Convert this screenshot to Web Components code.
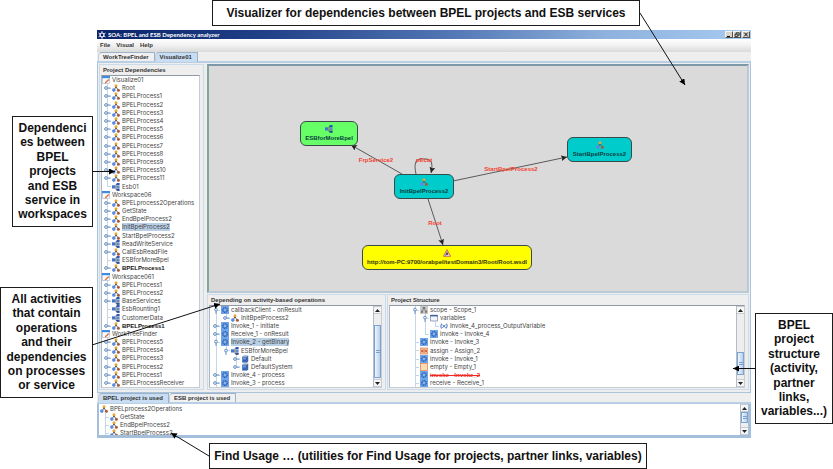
<!DOCTYPE html>
<html lang="en">
<head>
<meta charset="utf-8">
<title>SOA: BPEL and ESB Dependency analyzer</title>
<style>
  html, body { height: 100%; }
  body { margin: 0; background: #fff; font-family: "Liberation Sans", Arial, sans-serif; }
</style>
</head>
<body>
<annotated-page></annotated-page>
<script>
const define = (name, html, after) => customElements.define(name, class extends HTMLElement {
  connectedCallback() {
    if (this.shadowRoot) return;
    const root = this.attachShadow({ mode: "open" });
    const t = document.createElement("template");
    t.innerHTML = typeof html === "function" ? html(this) : html;
    root.append(t.content.cloneNode(true));
    if (after) after(root, this);
  }
});

const ICONS = {
  process: `<path d="M4 3 1.8 6M4 3l2.4 3" stroke="#665c4a" stroke-width=".8"/><circle cx="4" cy="1.7" r="1.5" fill="#e8a838"/><circle cx="4" cy="3.6" r=".8" fill="#555"/><circle cx="1.8" cy="6.1" r="1.8" fill="#5b8be0"/><circle cx="6.4" cy="6.3" r="1.5" fill="#a55a3c"/>`,
  esb: `<path d="M3 4h2M4 1.6v5M4 1.6h2M4 6.5h2" stroke="#444" stroke-width=".7" fill="none"/><rect x="0" y="2.3" width="3.4" height="3.2" fill="#3f74d4"/><rect x="4.6" y="0" width="3" height="2.4" fill="#2858b8"/><rect x="4.6" y="2.9" width="3" height="2.1" fill="#5a8ad8"/><rect x="4.6" y="5.5" width="3" height="2.4" fill="#2d4f98"/><rect x="3.4" y="3.3" width="1.3" height="1.3" fill="#d8b84a"/>`,
  workspace: `<rect x=".4" y=".4" width="7.2" height="7.2" fill="#fdfdfd" stroke="#8aa0bb" stroke-width=".5"/><rect x="0" y="0" width="8" height="2.2" fill="#3f8be0"/><path d="M3.2 7 6.8 3.4" stroke="#e0703a" stroke-width="1.4"/>`,
  gear: `<rect width="8" height="8" fill="#6fa4e6"/><circle cx="4" cy="4" r="2.3" fill="none" stroke="#2860b8" stroke-width="1.4" stroke-dasharray="1.1 .5"/><circle cx="4" cy="4" r="1.4" fill="#a9ccf6" stroke="#2c64bc" stroke-width=".5"/>`,
  cube: `<path d="M1.2 1.6 3 .3h4l-.8 1.2z" fill="#9fb4cc"/><path d="M1.2 1.6h5v6h-5z" fill="#3567b4"/><path d="M6.2 1.5 7.2.4v6.1l-1 1.1z" fill="#23457e"/><path d="M2 2.4h3v2H2z" fill="#6f9be0"/>`,
  scope: `<rect width="8" height="8" fill="#c9c9c9"/><rect x="2.8" y="1" width="2.4" height="2" fill="#777"/><rect x="1" y="4.8" width="2" height="2" fill="#777"/><rect x="5" y="4.8" width="2" height="2" fill="#777"/><path d="M4 3v1M2 4.8V4h4v.8" stroke="#777" stroke-width=".6" fill="none"/>`,
  folder: `<path d="M.5 7V1.2h7V7z" fill="#f2f6fb" stroke="#6c7fa0" stroke-width=".7"/><path d="M.3 2.4V1h7.4v1.4z" fill="#3b61a0"/>`,
  fx: `<path d="M1.6 1.6Q.2 4 1.4 6.6M6.6 1.6Q8 4 6.2 6.6M2.5 2.8 5.5 5.8M5.6 2.6 2.4 5.8" stroke="#2f62b4" stroke-width=".9" fill="none"/>`,
  assign: `<rect y="1" width="8" height="6" fill="#f7c9a8" stroke="#d8683c" stroke-width=".6"/><path d="M1 2.6 3 5.4M3 2.6 1 5.4M4 2.6v2.8M7 2.6 5 5.4M5 2.6 7 5.4" stroke="#c8451e" stroke-width=".8"/>`,
  empty: `<rect x=".4" y=".4" width="7.2" height="7.2" fill="#f8ddb2" stroke="#e07a4a" stroke-width=".7"/>`,
  warn: `<path d="M4 .6 7.6 7.3H.4z" fill="#f6dede" stroke="#c4383a" stroke-width=".7"/><path d="M4 2.6 2.6 5.8h2.8z" fill="#333"/><circle cx="2.8" cy="6" r=".8" fill="#5577cc"/>`,
  app: `<circle cx="4" cy="4" r="2" fill="none" stroke="#fff" stroke-width="1.2"/><path d="M4 0v2M4 6v2M.5 2l1.7 1M5.8 5l1.7 1M.5 6l1.7-1M5.8 3l1.7-1" stroke="#fff" stroke-width=".8"/>`
};

define("ui-icon", el => `
  <style>:host{display:block;flex:none;width:8px;height:8px} svg{display:block;width:100%;height:100%}</style>
  <svg viewBox="0 0 8 8" aria-hidden="true">${ICONS[el.getAttribute("name")]}</svg>`);

/* One line of a tree. "guides" has a digit for each indent before the handle, 1 where
   a vertical line passes; "node" is root, open, closed or leaf. */
define("tree-row", el => {
  const guides = el.getAttribute("guides") || "";
  const node = el.getAttribute("node") || "closed";
  const cells = [...guides].map(g => `<i class="${g === "1" ? "v" : ""}"></i>`).join("");
  const knob = node === "closed"
    ? `<path d="M5 4h3.4" stroke="#6a92c2" stroke-width="1"/><circle cx="4" cy="4" r="1.4" fill="#e8f1fb" stroke="#6a92c2"/>`
    : node === "open" ? `<path d="M5 5v3" stroke="#6a92c2" stroke-width="1"/><circle cx="5" cy="3.6" r="1.4" fill="#e8f1fb" stroke="#6a92c2"/>` : "";
  const handle = node === "root" ? "" : `<i class="v h ${el.hasAttribute("last") ? "end" : ""}"><svg viewBox="0 0 10 8" aria-hidden="true">${knob}</svg></i>`;
  return `
  <style>
    :host{display:flex;align-items:stretch;min-height:0;flex:1 1 0;color:#444;font:6px/8px Inter,"Liberation Sans",sans-serif;white-space:nowrap}
    :host([strong]){font:bold 6px/8px "Liberation Sans",Arial,sans-serif;color:#111}
    :host([removed]){font:bold 6px/8px "Liberation Sans",Arial,sans-serif;color:#f0281e}
    i{flex:none;width:10px;display:flex;align-items:center}
    .v{background:linear-gradient(#c3d6ea,#c3d6ea) 5px 0/1px 100% no-repeat}
    .h{background:linear-gradient(#c3d6ea,#c3d6ea) 5px 0/1px 100% no-repeat,linear-gradient(#c3d6ea,#c3d6ea) 5px 4px/4px 1px no-repeat}
    .end{background-size:1px 4px,4px 1px}
    svg{display:block;width:10px;height:8px}
    ui-icon{margin-right:2px;align-self:center}
    span{align-self:center}
    :host([selected]) span{background:#b8cfe5}
    :host([removed]) span{text-decoration:line-through}
  </style>${cells}${handle}<ui-icon name="${el.getAttribute("icon") || "process"}"></ui-icon><span><slot></slot></span>`;
});

define("tree-view", `
  <style>:host{display:flex;flex-direction:column;flex:1;min-width:0;min-height:0;overflow:hidden;background:#fff}</style><slot></slot>`);

define("scroll-bar", el => `
  <style>
    :host{display:flex;flex-direction:column;flex:none;width:8px;box-sizing:border-box;background:#eee;border-left:1px solid #b4bcc6}
    button{all:unset;flex:none;height:8px;display:grid;place-items:center;background:#f6f6f6;border:1px solid #c8ccd2;border-width:1px 0;box-sizing:border-box}
    svg{width:5px;height:3px}
    .track{flex:1;min-height:0;display:flex;flex-direction:column}
    .before{flex:${el.getAttribute("before")}}
    .thumb{flex:${el.getAttribute("thumb")};box-sizing:border-box;border:1px solid #7fa3d0;background:linear-gradient(90deg,#eef5fd,#b7d0ee);display:grid;place-items:center}
    .thumb::after{content:"";width:4px;height:3px;box-sizing:border-box;border:solid #7d9fcb;border-width:1px 0}
    .after{flex:${el.getAttribute("after")}}
  </style>
  <button aria-label="Scroll up"><svg viewBox="0 0 5 3"><path d="M0 3 2.5 0 5 3z" fill="#222"/></svg></button>
  <div class="track"><div class="before"></div><div class="thumb"></div><div class="after"></div></div>
  <button aria-label="Scroll down"><svg viewBox="0 0 5 3"><path d="M0 0h5L2.5 3z" fill="#222"/></svg></button>`);

define("title-bar", `
  <style>
    :host{display:flex;align-items:center;height:9px;padding:0 1px 0 1px;background:linear-gradient(90deg,#0a246a,#1f3f86 25%,#5479b6 55%,#8fb2de 78%,#a6caf0);color:#fff}
    h1{margin:0 auto 0 2px;font:bold 6px/9px Lato,"Liberation Sans",sans-serif;white-space:nowrap}
    .controls{display:flex}
    button{all:unset;width:8px;height:7px;box-sizing:border-box;background:#d8d4cc;border:1px solid;border-color:#f6f4f0 #55524c #55524c #f6f4f0}
    button:last-child{margin-left:1px}
    svg{display:block;width:6px;height:5px}
    path{fill:none;stroke:#111}
  </style>
  <ui-icon name="app"></ui-icon>
  <h1>SOA: BPEL and ESB Dependency analyzer</h1>
  <div class="controls">
    <button aria-label="Minimize"><svg viewBox="0 0 6 5"><path d="M1 4.5h3"/></svg></button>
    <button aria-label="Restore"><svg viewBox="0 0 6 5"><path d="M2.2 2V.8h3v2.4H4M1 2.2h2.8v2.2H1z" stroke-width=".8"/></svg></button>
    <button aria-label="Close"><svg viewBox="0 0 6 5"><path d="M1.2.6l3.6 3.8M4.8.6 1.2 4.4"/></svg></button>
  </div>`);

define("menu-bar", `
  <style>
    :host{display:flex;gap:6px;align-items:center;height:13px;padding:0 3px;background:linear-gradient(#fff,#f2f2f2 45%,#dadada)}
    button{all:unset;font:bold 6px/9px "Liberation Sans",Arial,sans-serif;color:#333}
  </style><button>File</button><button>Visual</button><button>Help</button>`);

define("tab-strip", el => {
  const tabs = el.getAttribute("labels").split("|"), on = +el.getAttribute("active");
  return `
  <style>
    :host{display:flex;flex:none;height:11px;padding-left:1px;border-bottom:2px solid #b8cfe5;box-sizing:border-box}
    button{all:unset;box-sizing:border-box;padding:0 5px 0 4px;border:1px solid #9db2c8;border-bottom:0;border-left-color:#c4d2e0;background:#f0f0f0;
      font:bold 6px/9px "Liberation Sans",Arial,sans-serif;color:#333;white-space:nowrap;border-top-left-radius:4px}
    button[aria-selected=true]{background:#c8ddf2;margin-bottom:-1px}
  </style>` + tabs.map((t, i) => `<button role="tab" aria-selected="${i === on}">${t}</button>`).join("");
});

define("titled-panel", el => `
  <style>
    :host{display:flex;flex-direction:column;min-width:0;min-height:0;box-sizing:border-box;border:1px solid #cbdbea;background:#eee;padding:0 3px 1px 1px}
    h2{margin:0 0 0 2px;font:bold 6px/10px "Liberation Sans",Arial,sans-serif;color:#333;white-space:nowrap}
    .box{flex:1;min-height:0;display:flex;border:1px solid;border-color:#8f9aa6 #c5ccd4 #c5ccd4 #a6b8ca;background:#fff}
  </style><h2>${el.getAttribute("heading")}</h2><div class="box"><slot></slot></div>`);

define("graph-node", el => `
  <style>
    :host{position:absolute;box-sizing:border-box;width:var(--w);height:25px;border:1px solid #3a4a4a;border-radius:6px;background:var(--fill);
      display:flex;flex-direction:column;align-items:center;justify-content:center;gap:1px;
      font:bold 6px/8px "Liberation Sans",Arial,sans-serif;color:var(--ink,#0b4040);white-space:nowrap}
  </style><ui-icon name="${el.getAttribute("icon")}"></ui-icon><span><slot></slot></span>`);

/* Free canvas of nodes joined by labelled arrows. */
define("dependency-graph", `
  <style>
    :host{display:block;position:relative;box-sizing:border-box;min-height:0;overflow:hidden;background:#dadada;border:2px solid;border-color:#7b97a8 #b9c9d6 #b9c9d6 #7fa79c}
    svg{position:absolute;left:0;top:0;width:600px;height:300px}
    .edge{fill:none;stroke:#5a5a5a;stroke-width:1}
    .label{position:absolute;transform:translate(-50%,-50%);font:bold 6px/8px "Liberation Sans",Arial,sans-serif;color:#f4402e;white-space:nowrap}
  </style>
  <svg aria-hidden="true">
    <defs><marker id="tip" viewBox="0 0 6 6" refX="6" refY="3" markerWidth="6" markerHeight="6" orient="auto"><path d="M0 0 6 3 0 6 1.2 3z" fill="#222"/></marker></defs>
    <path class="edge" marker-end="url(#tip)" d="M193 108 142 79"/>
    <path class="edge" marker-end="url(#tip)" d="M207 108C205 99 206 93 212 93H217C223 93 224 99 222 107"/>
    <path class="edge" marker-end="url(#tip)" d="M244 115 358 91"/>
    <path class="edge" marker-end="url(#tip)" d="M219 133 234 179"/>
  </svg>
  <span class="label" style="left:167px;top:94px">FrpService2</span>
  <span class="label" style="left:215px;top:94px">pEcat</span>
  <span class="label" style="left:302px;top:103px">StartBpelProcess2</span>
  <span class="label" style="left:226px;top:157px">Root</span>
  <graph-node icon="esb" style="left:91px;top:55px;--w:58px;--fill:#66ff66">ESBforMoreBpel</graph-node>
  <graph-node icon="process" style="left:185px;top:108px;--w:60px;--fill:#00cccc">InitBpelProcess2</graph-node>
  <graph-node icon="process" style="left:358px;top:71px;--w:65px;--fill:#00cccc">StartBpelProcess2</graph-node>
  <graph-node icon="warn" style="left:153px;top:179px;--w:170px;--fill:#ffff00;--ink:#333300">http://tom-PC:9700/orabpel/testDomain3/Root/Root.wsdl</graph-node>`);

define("analyzer-window", `
  <style>
    :host{display:flex;flex-direction:column;background:#eee;min-width:0;min-height:0;overflow:hidden}
    .top{flex:1;min-height:0;display:grid;grid-template-columns:105px minmax(0,1fr);gap:3px;padding:1px 1px 2px 1px;border:1px solid #a9c3dc;border-top:0}
    .right{display:grid;grid-template-rows:minmax(0,1fr) 96px;gap:1px;min-height:0;min-width:0}
    .pair{display:grid;grid-template-columns:179px minmax(0,1fr);gap:1px;min-height:0}
    .used{flex:none;height:34px;box-sizing:border-box;display:flex;border:1px solid #a3bfdb;border-width:0 3px 3px 2px;background:#fff}
    .used tree-row{flex:none;height:8px}
    .deps{padding-left:1px}
    .used tree-view{padding:1px 0 0 1px}
  </style>
  <title-bar></title-bar>
  <menu-bar></menu-bar>
  <tab-strip labels="WorkTreeFinder|Visualize01" active="1"></tab-strip>
  <div class="top">
    <titled-panel heading="Project Dependencies"><tree-view>
      <tree-row node="root" icon="workspace">Visualize01</tree-row>
      <tree-row>Root</tree-row>
      <tree-row>BPELProcess1</tree-row>
      <tree-row>BPELProcess2</tree-row>
      <tree-row>BPELProcess3</tree-row>
      <tree-row>BPELProcess4</tree-row>
      <tree-row>BPELProcess5</tree-row>
      <tree-row>BPELProcess6</tree-row>
      <tree-row>BPELProcess7</tree-row>
      <tree-row>BPELProcess8</tree-row>
      <tree-row>BPELProcess9</tree-row>
      <tree-row>BPELProcess10</tree-row>
      <tree-row>BPELProcess11</tree-row>
      <tree-row node="leaf" icon="esb" last>Esb01</tree-row>
      <tree-row node="root" icon="workspace">Workspace06</tree-row>
      <tree-row>BPELprocess2Operations</tree-row>
      <tree-row>GetState</tree-row>
      <tree-row>EndBpelProcess2</tree-row>
      <tree-row selected>InitBpelProcess2</tree-row>
      <tree-row>StartBpelProcess2</tree-row>
      <tree-row icon="esb">ReadWriteService</tree-row>
      <tree-row>CallEsbReadFile</tree-row>
      <tree-row node="leaf" icon="esb">ESBforMoreBpel</tree-row>
      <tree-row strong last>BPELProcess1</tree-row>
      <tree-row node="root" icon="workspace">Workspace061</tree-row>
      <tree-row>BPELProcess1</tree-row>
      <tree-row>BPELProcess2</tree-row>
      <tree-row icon="esb">BaseServices</tree-row>
      <tree-row node="leaf" icon="esb">EsbRounting1</tree-row>
      <tree-row node="leaf" icon="esb">CustomerData</tree-row>
      <tree-row strong last>BPELProcess1</tree-row>
      <tree-row node="root" icon="workspace">WorkTreeFinder</tree-row>
      <tree-row>BPELProcess5</tree-row>
      <tree-row>BPELProcess4</tree-row>
      <tree-row>BPELProcess3</tree-row>
      <tree-row>BPELProcess2</tree-row>
      <tree-row>BPELProcess1</tree-row>
      <tree-row last>BPELProcessReceiver</tree-row>
    </tree-view></titled-panel>
    <div class="right">
      <dependency-graph></dependency-graph>
      <div class="pair">
        <titled-panel heading="Depending on activity-based operations">
          <tree-view class="deps">
            <tree-row node="open" icon="gear">callbackClient - onResult</tree-row>
            <tree-row guides="1" last>InitBpelProcess2</tree-row>
            <tree-row icon="gear">Invoke_1 - initiate</tree-row>
            <tree-row icon="gear">Receive_1 - onResult</tree-row>
            <tree-row node="open" icon="gear" selected>Invoke_2 - getBinary</tree-row>
            <tree-row guides="1" node="open" icon="esb" last>ESBforMoreBpel</tree-row>
            <tree-row guides="10" icon="cube">Default</tree-row>
            <tree-row guides="10" icon="cube" last>DefaultSystem</tree-row>
            <tree-row icon="gear">Invoke_4 - process</tree-row>
            <tree-row icon="gear">Invoke_3 - process</tree-row>
          </tree-view>
          <scroll-bar before="12" thumb="54" after="1"></scroll-bar>
        </titled-panel>
        <titled-panel heading="Project Structure">
          <tree-view>
            <tree-row guides="00" node="open" icon="scope">scope - Scope_1</tree-row>
            <tree-row guides="001" node="open" icon="folder">variables</tree-row>
            <tree-row guides="0011" node="leaf" icon="fx" last>Invoke_4_process_OutputVariable</tree-row>
            <tree-row guides="001" node="leaf" icon="gear" last>invoke - Invoke_4</tree-row>
            <tree-row guides="00" node="leaf" icon="gear">invoke - Invoke_3</tree-row>
            <tree-row guides="00" node="leaf" icon="assign">assign - Assign_2</tree-row>
            <tree-row guides="00" node="leaf" icon="gear">invoke - Invoke_1</tree-row>
            <tree-row guides="00" node="leaf" icon="empty">empty - Empty_1</tree-row>
            <tree-row guides="00" node="leaf" icon="gear" removed>invoke - Invoke_2</tree-row>
            <tree-row guides="00" node="leaf" icon="gear">receive - Receive_1</tree-row>
          </tree-view>
          <scroll-bar before="40" thumb="22" after="4"></scroll-bar>
        </titled-panel>
      </div>
    </div>
  </div>
  <tab-strip labels="BPEL project is used|ESB project is used" active="0"></tab-strip>
  <div class="used">
    <tree-view>
      <tree-row node="root">BPELprocess2Operations</tree-row>
      <tree-row node="leaf">GetState</tree-row>
      <tree-row node="leaf">EndBpelProcess2</tree-row>
      <tree-row node="leaf">StartBpelProcess2</tree-row>
    </tree-view>
    <scroll-bar before="0" thumb="10" after="4"></scroll-bar>
  </div>`);

define("call-out", `
  <style>
    :host{position:absolute;box-sizing:border-box;border:1px solid #1c1c1c;background:#fff;color:#111;padding:4px;
      font:bold 12px/1.2 "Liberation Sans",Arial,sans-serif;text-align:center}
    :host([line]){white-space:nowrap;padding:5px 4px}
    p{margin:0}
  </style><p><slot></slot></p>`);

define("annotated-page", `
  <style>
    :host{display:flex;position:relative;height:100vh;box-sizing:border-box;padding:30px 82px 31px 97px}
    analyzer-window{flex:1}
    .arrows{position:absolute;left:0;top:0;width:100%;height:100%;pointer-events:none}
  </style>
  <analyzer-window></analyzer-window>
  <svg class="arrows" aria-hidden="true">
    <defs><marker id="head" viewBox="0 0 6 6" refX="6" refY="3" markerWidth="6" markerHeight="6" orient="auto"><path d="M0 0 6 3 0 6z" fill="#000"/></marker></defs>
    <g stroke="#111" stroke-width="1">
      <path marker-end="url(#head)" d="M640 13 685 85"/>
      <path marker-end="url(#head)" d="M92 171.5H115"/>
      <path marker-end="url(#head)" d="M92 345 220 304"/>
      <path marker-end="url(#head)" d="M755 368.5H733"/>
      <path marker-end="url(#head)" d="M209 456 171 433"/>
    </g>
  </svg>
  <call-out line style="left:212px;top:0;width:428px">Visualizer for dependencies between BPEL projects and ESB services</call-out>
  <call-out style="left:12px;top:116px;width:81px">Dependenci<br>es between<br>BPEL<br>projects<br>and ESB<br>service in<br>workspaces</call-out>
  <call-out style="left:0;top:287px;width:93px">All activities<br>that contain<br>operations<br>and their<br>dependencies<br>on processes<br>or service</call-out>
  <call-out style="right:0;top:313px;width:78px">BPEL<br>project<br>structure<br>(activity,<br>partner<br>links,<br>variables...)</call-out>
  <call-out line style="left:209px;top:443px;width:438px">Find Usage … (utilities for Find Usage for projects, partner links, variables)</call-out>`);
</script>
</body>
</html>
